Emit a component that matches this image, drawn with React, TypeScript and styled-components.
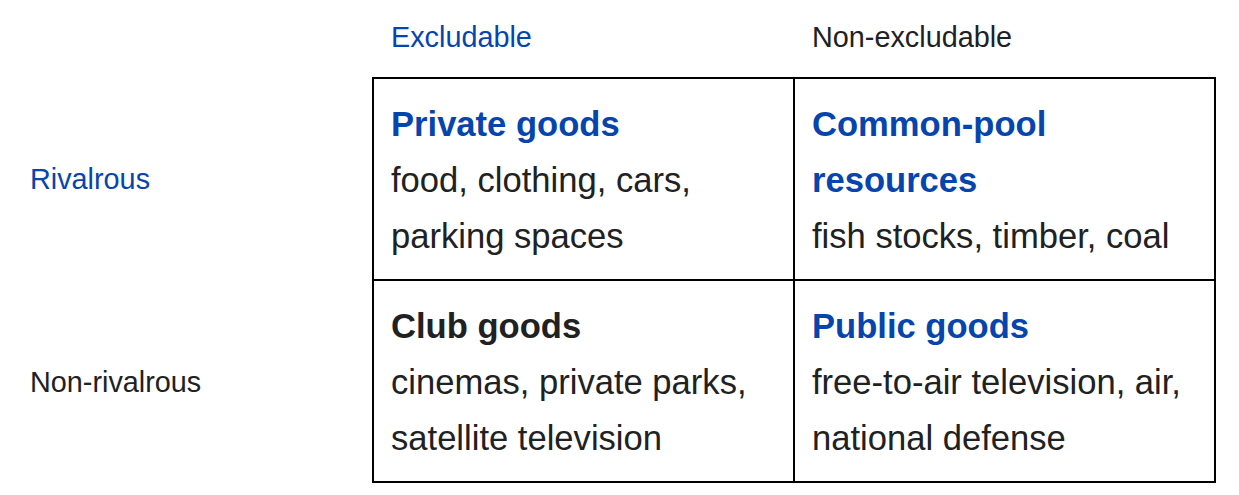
import React from "react"
import styled, { createGlobalStyle } from "styled-components"

const GlobalStyle = createGlobalStyle`
  body {
    margin: 0;
    background: #ffffff;
    font-family: "Liberation Sans", Arial, sans-serif;
    color: #202122;
  }
`

const Matrix = styled.div`
  display: grid;
  grid-template-columns: 372px 421px 423px;
  grid-template-rows: 77px 202px 204px;
`

const Corner = styled.div``

const ColHead = styled.div<{ $link?: boolean }>`
  display: flex;
  align-items: center;
  padding: 0 0 3px 19px;
  font-size: 28.8px;
  color: ${(p) => (p.$link ? "#0645ad" : "#202122")};
`

const RowHead = styled.div<{ $link?: boolean }>`
  display: flex;
  align-items: center;
  padding: 3px 0 0 30px;
  font-size: 28.8px;
  color: ${(p) => (p.$link ? "#0645ad" : "#202122")};
`

const Cell = styled.div<{ $right?: boolean; $bottom?: boolean }>`
  border-left: 2px solid #000;
  border-top: 2px solid #000;
  border-right: ${(p) => (p.$right ? "2px solid #000" : "none")};
  border-bottom: ${(p) => (p.$bottom ? "2px solid #000" : "none")};
  padding: 17px 16px 0 17px;
  font-size: 34.6px;
  line-height: 56px;
`

const Title = styled.div<{ $link?: boolean }>`
  font-weight: bold;
  color: ${(p) => (p.$link ? "#0645ad" : "#202122")};
`

const Examples = styled.div`
  color: #202122;
`

export default function App() {
  return (
    <>
      <GlobalStyle />
      <Matrix>
        <Corner />
        <ColHead $link>Excludable</ColHead>
        <ColHead>Non-excludable</ColHead>

        <RowHead $link>Rivalrous</RowHead>
        <Cell>
          <Title $link>Private goods</Title>
          <Examples>food, clothing, cars, parking spaces</Examples>
        </Cell>
        <Cell $right>
          <Title $link>Common-pool resources</Title>
          <Examples>fish stocks, timber, coal</Examples>
        </Cell>

        <RowHead>Non-rivalrous</RowHead>
        <Cell $bottom>
          <Title>Club goods</Title>
          <Examples>cinemas, private parks, satellite television</Examples>
        </Cell>
        <Cell $right $bottom>
          <Title $link>Public goods</Title>
          <Examples>free-to-air television, air, national defense</Examples>
        </Cell>
      </Matrix>
    </>
  )
}
